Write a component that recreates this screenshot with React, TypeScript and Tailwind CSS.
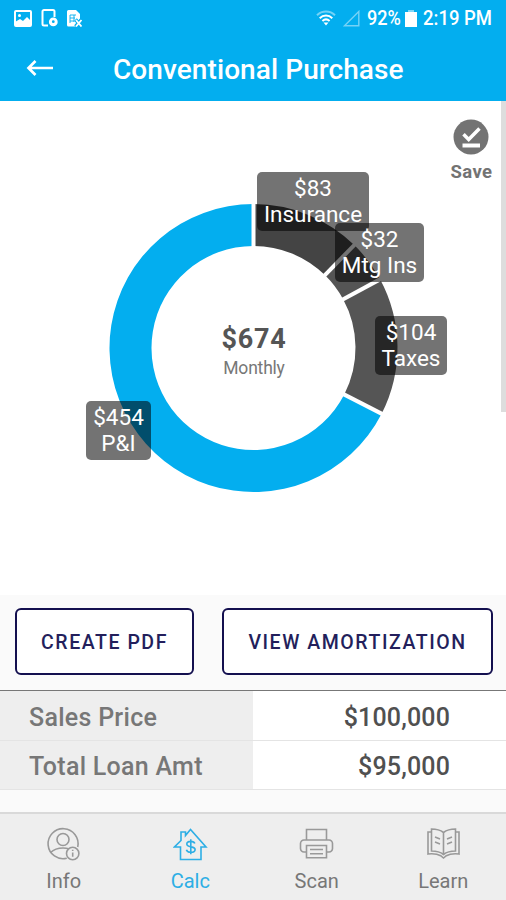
import React, { useState } from 'react';

interface Segment {
    label: string;
    amount: number;
    color: string;
    badge: string;
}

interface Tab {
    name: string;
    icon: React.ReactNode;
}

const SEGMENTS: Segment[] = [
    { label: 'Insurance', amount: 83, color: '#444444', badge: 'left-[257px] top-[71px] w-[112px]' },
    { label: 'Mtg Ins', amount: 32, color: '#555555', badge: 'left-[335px] top-[122px] w-[89px]' },
    { label: 'Taxes', amount: 104, color: '#555555', badge: 'left-[375px] top-[215px] w-[72px]' },
    { label: 'P&I', amount: 454, color: '#03aeef', badge: 'left-[86px] top-[300px] w-[65px]' },
];

const ROWS = [
    { name: 'Sales Price', value: '$100,000' },
    { name: 'Total Loan Amt', value: '$95,000' },
];

const TABS: Tab[] = [
    {
        name: 'Info',
        icon: (
            <>
                <path d="M20.800 31.200A15 15 0 1 1 31.700 20" />
                <circle cx="17" cy="12.500" r="6" />
                <path d="M4.500 25.500c3.500-3.300 7.500-4.500 12.500-4.500 2.200 0 4 .2 5.500.7" />
                <circle cx="26.700" cy="26.500" r="6.200" />
                <path d="M26.700 25.500v4.300M26.700 22.800v1.100" />
            </>
        ),
    },
    {
        name: 'Calc',
        icon: (
            <>
                <path d="M7.500 32.500V20H1.500L8 13.500V5h4.500v3.500L17.500 2.500 33 20h-5v12.500z" />
                <path d="M21.800 16.600c-.5-1.500-2-2.200-4-2.200-2.400 0-4 1-4 2.700 0 4 8.300 1.600 8.300 5.300 0 1.800-1.800 2.800-4.300 2.800-2.400 0-4-.9-4.400-2.500M17.800 12.300v15" />
            </>
        ),
    },
    {
        name: 'Scan',
        icon: (
            <>
                <path d="M7.500 13V2.500h20V13" />
                <path d="M7.500 25H5a3.500 3.500 0 0 1-3.500-3.500v-5A3.500 3.500 0 0 1 5 13h25a3.500 3.500 0 0 1 3.500 3.500v5A3.500 3.500 0 0 1 30 25h-2.500" />
                <path d="M7.500 18.500h20v12.300h-20zM11 22.500h13M11 26.700h13" />
            </>
        ),
    },
    {
        name: 'Learn',
        icon: (
            <>
                <path d="M17.500 5.500C14.300 3 10 2 5.500 2v22c4.500 0 8.800 1 12 3.500C20.700 25 25 24 29.500 24V2c-4.500 0-8.800 1-12 3.500zv22" />
                <path d="M5.500 5H2v22c5-.5 9.500 0 12.700 1.700l2.800 2.300 2.800-2.300C23.500 27 28 26.500 33 27V5h-3.500" />
                <path d="M9 10l5 2M9 15l5 2M26 10l-5 2M26 15l-5 2" />
            </>
        ),
    },
];

const CENTER = { x: 253.5, y: 247 };
const OUTER = 144;
const INNER = 102;

const pointAt = (angle: number, radius: number) => {
    const x = CENTER.x + radius * Math.sin(angle);
    const y = CENTER.y - radius * Math.cos(angle);
    return `${x.toFixed(2)} ${y.toFixed(2)}`;
};

const arcPath = (start: number, end: number) => {
    const large = end - start > Math.PI ? 1 : 0;
    return [
        `M${pointAt(start, OUTER)}`,
        `A${OUTER} ${OUTER} 0 ${large} 1 ${pointAt(end, OUTER)}`,
        `L${pointAt(end, INNER)}`,
        `A${INNER} ${INNER} 0 ${large} 0 ${pointAt(start, INNER)}Z`,
    ].join('');
};

const StatusBar: React.FC = () => (
    <div className="h-9 flex items-center justify-between pl-[14px] pr-[14px]">
        <div className="flex items-center gap-[9px]">
            <svg width="18" height="17" viewBox="0 0 18 17" fill="none">
                <rect x="1" y="1" width="16" height="15" rx="1" stroke="white" strokeWidth="2" />
                <path d="M1 12l5-3 3 2 4-4 4 4v5H1z" fill="white" />
                <circle cx="5.500" cy="5.500" r="1.500" fill="white" />
            </svg>
            <svg width="17" height="18" viewBox="0 0 17 18" fill="none">
                <path d="M7 16.500H3a1.500 1.500 0 0 1-1.500-1.500V2.500A1.500 1.500 0 0 1 3 1h9a1.500 1.500 0 0 1 1.500 1.500V8" stroke="white" strokeWidth="2" />
                <path fillRule="evenodd" d="M12.300 8.500a4.400 4.400 0 1 1 0 8.800 4.400 4.400 0 0 1 0-8.800zm0 2.800a1.400 1.400 0 1 0 0 2.800 1.400 1.400 0 0 0 0-2.800z" fill="white" />
            </svg>
            <svg width="16" height="17" viewBox="0 0 16 17" fill="none">
                <path d="M1.500 0H9l4 4v5l-4 7.500H1.500A1.500 1.500 0 0 1 0 15V1.500A1.500 1.500 0 0 1 1.500 0z" fill="white" />
                <path d="M3 5h6M3 8h5M3 11h4M3 5v8M7 5v7" stroke="#03aeef" strokeWidth="0.900" />
                <path d="M8.500 9.500l6 7M14.500 9.500l-6 7" stroke="#03aeef" strokeWidth="3.500" />
                <path d="M9 10l5.500 6.500M14.500 10L9 16.500" stroke="white" strokeWidth="1.800" />
            </svg>
        </div>
        <div className="flex items-center text-white">
            <svg width="20" height="16" viewBox="0 0 20 16" fill="none" stroke="white" strokeWidth="2">
                <path d="M1 5.200C6 .3 14 .3 19 5.200" opacity="0.450" />
                <path d="M3.700 8.200c3.600-3.500 9-3.500 12.600 0" />
                <path d="M6.400 11c2.100-1.900 5.100-1.900 7.200 0" />
                <path d="M7.500 12.500l2.500 3 2.500-3z" fill="white" stroke="none" />
            </svg>
            <svg className="ml-[7px]" width="17" height="17" viewBox="0 0 17 17" fill="none" stroke="white" opacity="0.450">
                <path d="M15.800 1.500v14.300H1.500z" strokeWidth="1.400" />
            </svg>
            <span className="ml-[7px] w-[34px] text-[21px] leading-6 whitespace-nowrap font-medium">
                <span className="inline-block origin-left scale-x-[0.860]">92%</span>
            </span>
            <svg className="ml-[4px]" width="12" height="17" viewBox="0 0 12 17" fill="white">
                <path d="M3 0h6v2H3z" opacity="0.500" />
                <path d="M0 2h12v15H0z" />
            </svg>
            <span className="ml-[6px] w-[69px] text-[21px] leading-6 whitespace-nowrap font-medium">
                <span className="inline-block origin-left scale-x-[0.880]">2:19 PM</span>
            </span>
        </div>
    </div>
);

const PaymentChart: React.FC = () => {
    const total = SEGMENTS.reduce((sum, s) => sum + s.amount, 0);
    const starts = SEGMENTS.map((_, i) =>
        (SEGMENTS.slice(0, i).reduce((sum, s) => sum + s.amount, 0) / total) * Math.PI * 2
    );

    return (
        <div className="relative h-full w-full">
            <svg className="block" width="506" height="494" viewBox="0 0 506 494">
                {SEGMENTS.map((segment, i) => (
                    <path
                        key={segment.label}
                        d={arcPath(starts[i], starts[i + 1] ?? Math.PI * 2)}
                        fill={segment.color}
                    />
                ))}
                {starts.map((angle) => (
                    <path
                        key={angle}
                        d={`M${pointAt(angle, INNER - 2)}L${pointAt(angle, OUTER + 2)}`}
                        stroke="white"
                        strokeWidth="4"
                    />
                ))}
            </svg>
            <div className="absolute left-[153px] top-[222px] w-[202px] text-center">
                <div className="text-[27px] leading-8 font-bold tracking-[0.700px] text-[#555555]">$674</div>
                <div className="text-[17.500px] leading-[26px] tracking-[-0.200px] text-[#777777]">Monthly</div>
            </div>
            {SEGMENTS.map((segment) => (
                <div
                    key={segment.label}
                    className={`absolute h-[59px] rounded-[5px] bg-black/55 pt-[3px] text-center text-[22.500px] leading-[26px] text-white whitespace-nowrap ${segment.badge}`}
                >
                    <div>${segment.amount}</div>
                    <div>{segment.label}</div>
                </div>
            ))}
            <button className="absolute left-[441px] top-[18px] w-[60px] flex flex-col items-center text-[#737373]">
                <svg width="36" height="36" viewBox="0 0 36 36">
                    <circle cx="18" cy="18" r="17.500" fill="currentColor" />
                    <path d="M10.500 15.200l5.200 5.200L26.500 9.500" fill="none" stroke="white" strokeWidth="3.500" />
                    <path d="M9.500 24.500h17.500v4H9.500z" fill="white" />
                </svg>
                <span className="mt-[3px] pl-px text-[18.500px] leading-7 font-bold tracking-[0.400px]">Save</span>
            </button>
            <div className="absolute right-0 top-0 h-[311px] w-[5px] bg-[#dddddd]" />
        </div>
    );
};

export default function App() {
    const [activeTab, setActiveTab] = useState('Calc');

    return (
        <div className="flex h-[900px] w-[506px] flex-col overflow-hidden bg-[#fafafa] font-[Roboto,sans-serif]">
            <header className="h-[101px] shrink-0 bg-[#03aeef]">
                <StatusBar />
                <div className="flex h-[65px] items-center pl-[26px]">
                    <svg width="28" height="20" viewBox="0 0 28 20" fill="none" stroke="white" strokeWidth="2.700">
                        <path d="M27 9H3M9.500 2L2.500 9l7 7" />
                    </svg>
                    <h1 className="ml-[59px] pt-[2px] text-[28px] leading-9 font-medium tracking-[0.080px] text-white whitespace-nowrap">
                        Conventional Purchase
                    </h1>
                </div>
            </header>

            <main className="flex flex-1 flex-col">
                <section className="h-[494px] bg-white">
                    <PaymentChart />
                </section>

                <div className="flex h-[95px] gap-7 pl-[15px] pt-[13px]">
                    <button className="h-[67px] w-[179px] rounded-[6px] border-2 border-[#14104f] bg-white pt-[3px] text-[19.500px] font-medium tracking-[1.550px] text-[#231f5c]">
                        CREATE PDF
                    </button>
                    <button className="h-[67px] w-[271px] rounded-[6px] border-2 border-[#14104f] bg-white pt-[3px] text-[19.500px] font-medium tracking-[1.550px] text-[#231f5c]">
                        VIEW AMORTIZATION
                    </button>
                </div>

                <div className="border-t border-[#777777]">
                    {ROWS.map((row) => (
                        <div key={row.name} className="flex h-[49.5px] border-b border-[#e4e4e4] text-[25px]">
                            <div className="flex w-[253px] items-center bg-[#eeeeee] pl-[29px] pt-[4px] font-medium tracking-[0.280px] text-[#777777]">
                                {row.name}
                            </div>
                            <div className="flex flex-1 items-center justify-end bg-white pr-[56px] pt-[4px] font-medium tracking-[0.150px] text-[#505050]">
                                {row.value}
                            </div>
                        </div>
                    ))}
                </div>
            </main>

            <nav className="grid h-[88px] shrink-0 grid-cols-4 border-t-2 border-[#d9d9d9] bg-[#eeeeee]">
                {TABS.map((tab) => (
                    <button
                        key={tab.name}
                        onClick={() => setActiveTab(tab.name)}
                        className={`flex flex-col items-center pt-[13px] pl-px ${activeTab === tab.name ? 'text-[#2daee5]' : 'text-[#777777]'}`}
                    >
                        <svg
                            className={activeTab === tab.name ? '' : 'text-[#999999]'}
                            width="35"
                            height="35"
                            viewBox="0 0 35 35"
                            fill="none"
                            stroke="currentColor"
                            strokeWidth="1.600"
                        >
                            {tab.icon}
                        </svg>
                        <span className="mt-[5px] text-[20px] leading-7">{tab.name}</span>
                    </button>
                ))}
            </nav>
        </div>
    );
}
